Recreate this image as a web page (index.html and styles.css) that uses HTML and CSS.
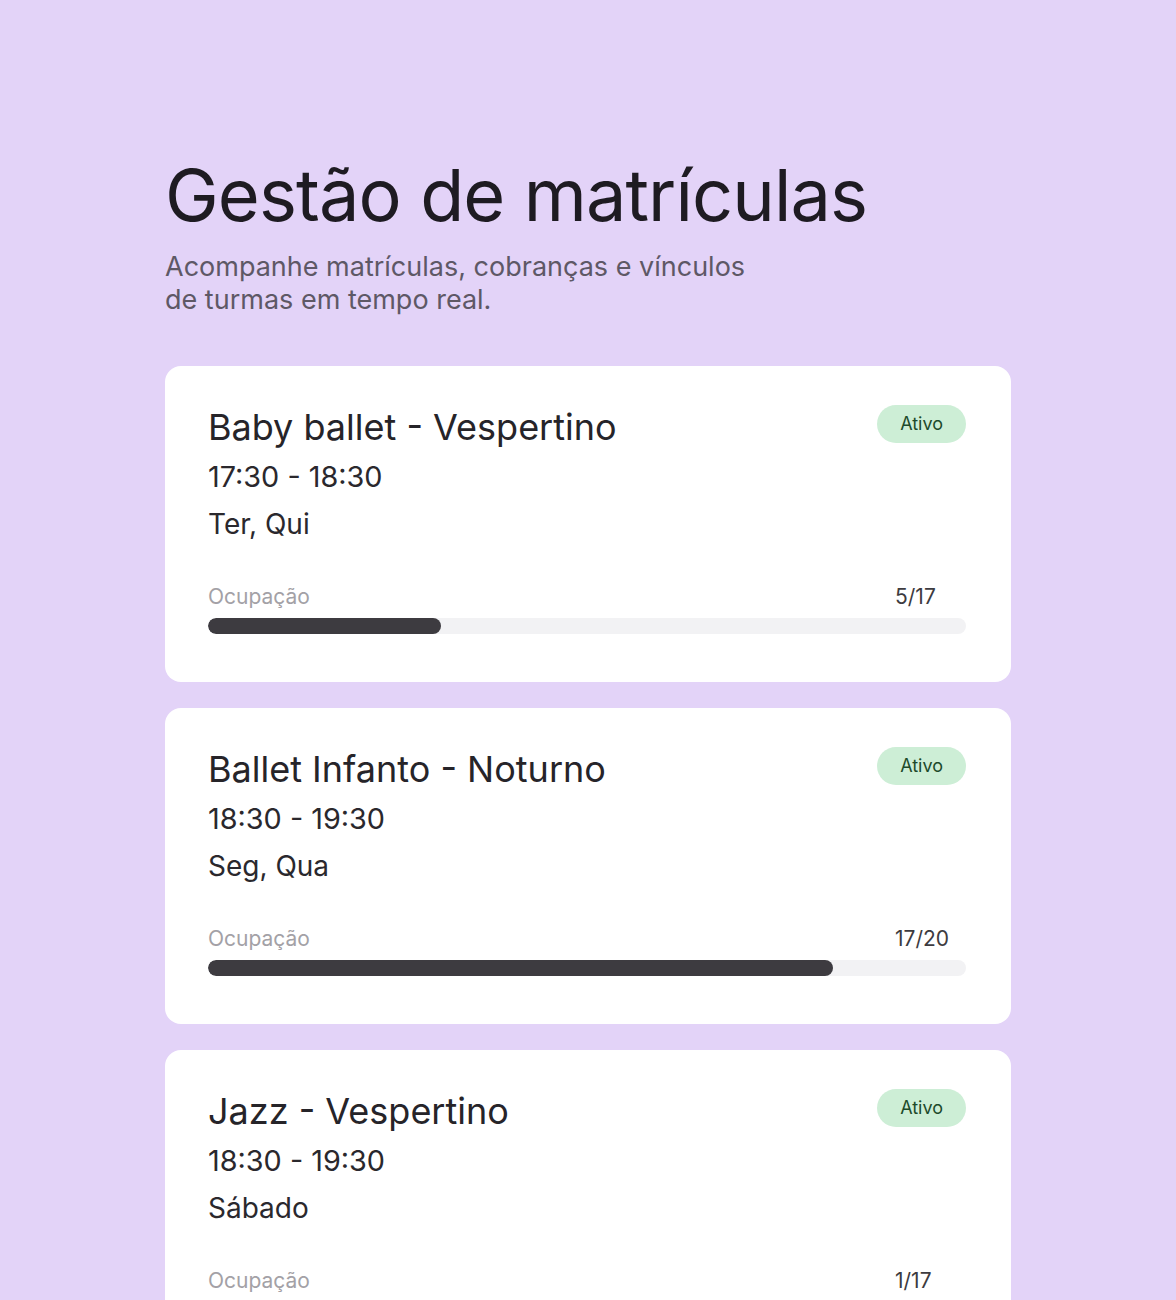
FILE: index.html
```html
<!DOCTYPE html>
<html lang="pt-BR">
<head>
    <meta charset="UTF-8">
    <meta name="viewport" content="width=device-width, initial-scale=1.0">
    <title>Gestão de matrículas</title>
    <link rel="stylesheet" href="styles.css">
</head>
<body>

    <main class="page">
        <header class="page-header">
            <h1>Gestão de matrículas</h1>
            <p class="subtitle">Acompanhe matrículas, cobranças e vínculos de turmas em tempo real.</p>
        </header>

        <!-- Turmas -->
        <section class="class-list">
            <article class="class-card">
                <div class="card-top">
                    <div class="class-info">
                        <h2>Baby ballet - Vespertino</h2>
                        <p class="class-time">17:30 - 18:30</p>
                        <p class="class-days">Ter, Qui</p>
                    </div>
                    <span class="badge">Ativo</span>
                </div>
                <div class="occupancy">
                    <div class="occupancy-label">
                        <span>Ocupação</span>
                        <span class="occupancy-count">5/17</span>
                    </div>
                    <div class="bar"><div class="bar-fill" style="width: 30.7%"></div></div>
                </div>
            </article>

            <article class="class-card">
                <div class="card-top">
                    <div class="class-info">
                        <h2>Ballet Infanto - Noturno</h2>
                        <p class="class-time">18:30 - 19:30</p>
                        <p class="class-days">Seg, Qua</p>
                    </div>
                    <span class="badge">Ativo</span>
                </div>
                <div class="occupancy">
                    <div class="occupancy-label">
                        <span>Ocupação</span>
                        <span class="occupancy-count">17/20</span>
                    </div>
                    <div class="bar"><div class="bar-fill" style="width: 82.5%"></div></div>
                </div>
            </article>

            <article class="class-card">
                <div class="card-top">
                    <div class="class-info">
                        <h2>Jazz - Vespertino</h2>
                        <p class="class-time">18:30 - 19:30</p>
                        <p class="class-days">Sábado</p>
                    </div>
                    <span class="badge">Ativo</span>
                </div>
                <div class="occupancy">
                    <div class="occupancy-label">
                        <span>Ocupação</span>
                        <span class="occupancy-count">1/17</span>
                    </div>
                    <div class="bar"><div class="bar-fill" style="width: 5.9%"></div></div>
                </div>
            </article>
        </section>
    </main>

</body>
</html>
```

FILE: styles.css
```css
body {
    margin: 0;
    background: #e3d3f8;
    font-family: 'Inter', 'Noto Sans', sans-serif;
    color: #2a282d;
}
.page {
    width: 846px;
    margin: 0 auto 0 165px;
    padding-top: 152px;
}
.page-header h1 {
    margin: 0;
    font-size: 72px;
    font-weight: 400;
    line-height: 86px;
    letter-spacing: -0.9px;
    color: #1e1b22;
}
.subtitle {
    margin: 12px 0 0;
    max-width: 600px;
    font-size: 27px;
    line-height: 33px;
    color: #5e5866;
}
.class-list {
    display: flex;
    flex-direction: column;
    gap: 26px;
    margin-top: 50px;
}
.class-card {
    background: #ffffff;
    border-radius: 16px;
    padding: 39px 45px 48px 43px;
}
.card-top {
    display: flex;
    justify-content: space-between;
    align-items: flex-start;
}
.class-info h2 {
    margin: 0;
    font-size: 36px;
    font-weight: 400;
    line-height: 44px;
    color: #262429;
}
.class-time,
.class-days {
    margin: 10px 0 0;
    font-size: 28px;
    line-height: 36px;
    color: #2a282d;
}
.class-time {
    font-size: 28.8px;
}
.class-days {
    margin-top: 11px;
}
.badge {
    display: inline-block;
    padding: 0 23px;
    height: 38px;
    line-height: 38px;
    border-radius: 19px;
    background: #cdeed6;
    color: #1d4a2b;
    font-size: 18px;
}
.occupancy {
    margin-top: 41px;
}
.occupancy-label {
    display: flex;
    justify-content: space-between;
    font-size: 21px;
    line-height: 28px;
    color: #a3a1a6;
    margin-bottom: 7px;
}
.occupancy-count {
    width: 71px;
    color: #3d3b40;
}
.bar {
    height: 16px;
    background: #f2f2f4;
    border-radius: 8px;
    overflow: hidden;
}
.bar-fill {
    height: 100%;
    background: #3d3b40;
    border-radius: 8px;
}
```
